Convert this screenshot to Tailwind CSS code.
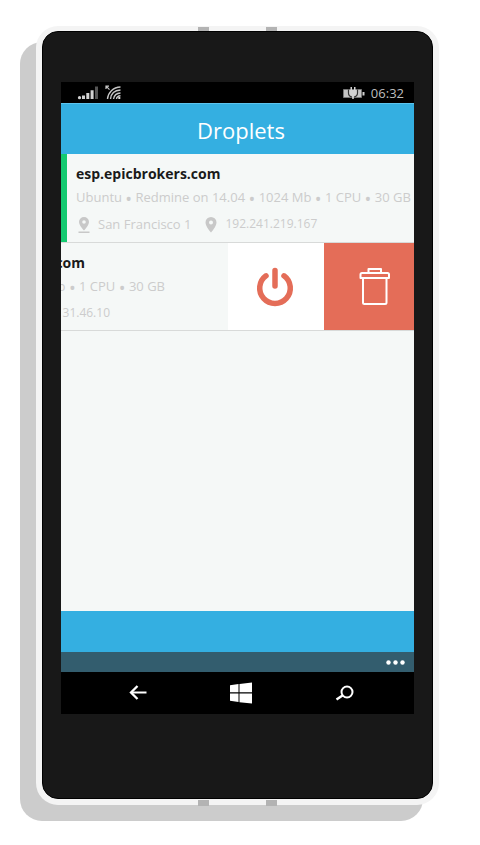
<!DOCTYPE html>
<html lang="en">
<head>
<meta charset="utf-8">
<meta name="viewport" content="width=device-width, initial-scale=1">
<title>Droplets</title>
<script src="https://cdn.jsdelivr.net/npm/@tailwindcss/browser@4"></script>
</head>
<body class="flex min-h-screen bg-white pt-[26px] pr-[41px] pb-10 pl-9 font-['Open_Sans','Noto_Sans',sans-serif]">
<div class="relative flex flex-1 rounded-[22px] bg-[#f4f4f4] px-[6px] pt-[5px] pb-[6px] shadow-[-16px_16px_0_#cccccc]">
  <!-- Antenna bands -->
  <div class="absolute inset-x-0 top-px flex justify-center gap-[57px]"><i class="h-1 w-[11px] bg-[#b3b3b3]"></i><i class="h-1 w-[11px] bg-[#b3b3b3]"></i></div>
  <div class="absolute inset-x-0 -bottom-px flex justify-center gap-[57px]"><i class="h-[6px] w-[11px] bg-[#b3b3b3]"></i><i class="h-[6px] w-[11px] bg-[#b3b3b3]"></i></div>

  <div class="flex min-w-0 flex-1 rounded-2xl border border-black bg-[#181818] px-[18px] pt-[50px] pb-[84px]">
    <div class="flex min-w-0 flex-1 flex-col overflow-hidden bg-[#f5f8f7]">
      <!-- Status bar -->
      <div class="flex h-[21px] shrink-0 items-center bg-black pr-[10px] pl-4 text-[#bdbdbd]">
        <svg class="h-4 w-[22px]" viewBox="0 0 22 16" fill="#d2d2d2" aria-label="Signal"><circle cx="2.5" cy="12.7" r="1.6"/><path d="M5 10.500h3v3.500H5zM9.300 8h3v6h-3zM13.600 5.300h3V14h-3z"/><path fill="#555" d="M18 1.500h3V14h-3z"/></svg>
        <svg class="ml-[6px] h-4 w-4" viewBox="0 0 16 16" fill="none" stroke="#c6c6c6" stroke-width="1.400" aria-label="Wi-Fi"><path d="M2.500 14C3 7.500 8 2.200 15.500 2M5.500 14C6 9 9.500 5.300 15.500 5M8.500 14C9 11 11 8.300 15.500 8M11.500 14c.2-2 1.500-3 4-3.200"/><path d="M13.300 12h2v2h-2z" fill="#ddd" stroke="none"/><path d="M1 4V1.200h3M1 1.200l3.500 3.500" stroke-width="1.200"/></svg>
        <svg class="ml-auto h-4 w-[23px]" viewBox="0 0 23 16" aria-label="Charging"><path d="M1.500 4.500h18v8h-18z" fill="#c4c4c4" stroke="#777"/><path d="M20.500 7h2v3.500h-2z" fill="#cfcfcf"/><path d="M6.500 4.500V8c0 2 1.500 3.500 3.500 4M15.500 4.500V8c0 2-1.500 3.500-3.500 4" fill="none" stroke="#333" stroke-width="1.200"/><path d="M7.500 5h7v3c0 2-1.700 3-3.500 3S7.500 10 7.500 8zM8.500 2H10v4H8.500zM12 2h1.500v4H12zM10.200 10h1.600v4h-1.600z" fill="#d2d2d2"/></svg>
        <time class="ml-[6px] text-[13px] leading-5">06:32</time>
      </div>

      <header class="flex h-[51px] shrink-0 items-center justify-center border-t border-[#5cc4ee] bg-[#34afe1] pt-[2px] pl-[7px] text-white">
        <h1 class="text-[22px] leading-8">Droplets</h1>
      </header>

      <main class="flex-1">
        <ul>
          <li class="flex h-[89px] border-b border-[#d8dad9]">
            <span class="w-[6px] shrink-0 bg-[#14ca70]"></span>
            <a href="#" class="block min-w-0 flex-1 pt-[10px] pl-[9px] text-[13px] whitespace-nowrap text-[#cccccc]">
              <h2 class="text-[14px] leading-5 font-bold text-[#1a1a1a]">esp.epicbrokers.com</h2>
              <p class="mt-[3px] h-5 leading-5">Ubuntu <span class="align-middle text-lg leading-none">•</span> Redmine on 14.04 <span class="align-middle text-lg leading-none">•</span> 1024 Mb <span class="align-middle text-lg leading-none">•</span> 1 CPU <span class="align-middle text-lg leading-none">•</span> 30 GB</p>
              <p class="mt-[7px] flex items-center leading-5">
                <svg class="mt-px h-4 w-4" viewBox="0 0 16 16" fill="#c8c8c8" fill-rule="evenodd"><path d="M8 0a5 5 0 0 0-5 5c0 3.500 5 8.500 5 8.500S13 8.500 13 5a5 5 0 0 0-5-5zm0 3.200a1.800 1.800 0 1 1 0 3.600 1.800 1.800 0 0 1 0-3.600zM2.500 14.500h11V16h-11z"/></svg>
                <span class="ml-[6px]">San Francisco 1</span>
                <svg class="mt-px ml-3 h-4 w-4" viewBox="0 0 16 16" fill="#c8c8c8" fill-rule="evenodd"><path d="M8 0a5.500 5.500 0 0 0-5.500 5.500C2.500 9.500 8 15.500 8 15.500s5.500-6 5.500-10A5.500 5.500 0 0 0 8 0zm0 3.500a2 2 0 1 1 0 4 2 2 0 0 1 0-4z"/></svg>
                <span class="ml-[6px] text-xs leading-5">192.241.219.167</span>
              </p>
            </a>
          </li>
          <!-- Row swiped left to reveal its actions -->
          <li class="flex h-[88px] border-b border-[#d8dad9]">
            <a href="#" class="block min-w-0 flex-1 overflow-hidden pt-[10px] text-[13px] whitespace-nowrap text-[#cccccc]">
              <h2 class="flex w-6 justify-end text-[14px] leading-5 font-bold text-[#1a1a1a]">com</h2>
              <p class="mt-[3px] flex h-5 w-[104px] justify-end leading-5"><span>b <span class="align-middle text-lg leading-none">•</span> 1 CPU <span class="align-middle text-lg leading-none">•</span> 30 GB</span></p>
              <p class="mt-[7px] flex w-[49px] justify-end text-xs leading-5">31.46.10</p>
            </a>
            <button type="button" aria-label="Power" class="flex w-24 shrink-0 items-center justify-center bg-white pr-[2px]">
              <svg class="h-10 w-10" viewBox="0 0 40 40" fill="none" stroke="#e46d58" stroke-width="5.500" stroke-linecap="round"><path d="M20 3.500V19M11 8.800A15.300 15.300 0 1 0 29 8.800"/></svg>
            </button>
            <button type="button" aria-label="Delete" class="flex w-[90px] shrink-0 items-center justify-center bg-[#e46d58] pl-3">
              <svg class="h-10 w-8" viewBox="0 0 32 40" fill="none" stroke="#fff" stroke-width="2" stroke-linejoin="round"><path d="M9.500 6V2h12.500v4M1.500 11V7.500q0-1.500 1.500-1.500h25.500q1.500 0 1.500 1.500V11zM4 11v24.500q0 1.500 1.500 1.500H26q1.500 0 1.500-1.500V11"/></svg>
            </button>
          </li>
        </ul>
      </main>

      <div class="h-[41px] shrink-0 bg-[#34afe1]"></div>
      <div class="flex h-5 shrink-0 items-center justify-end bg-[#335d6e] pr-[9px]">
        <button type="button" aria-label="More"><svg class="h-[5px] w-[19px]" viewBox="0 0 19 5" fill="#fff"><circle cx="2.500" cy="2.500" r="2.200"/><circle cx="9.500" cy="2.500" r="2.200"/><circle cx="16.500" cy="2.500" r="2.200"/></svg></button>
      </div>
      <nav class="grid h-[42px] shrink-0 grid-cols-[1fr_56px_1fr] items-center justify-items-center bg-black pl-[7px]">
        <button type="button" aria-label="Back" class="pr-1"><svg class="h-4 w-5" viewBox="0 0 20 16" fill="none" stroke="#fff" stroke-width="2"><path d="M17.500 7.500H2"/><path d="M8.500 1 2 7.500 8.500 14" stroke-width="2.300"/></svg></button>
        <button type="button" aria-label="Start"><svg class="h-[22px] w-[22px]" viewBox="0 0 22 22" fill="#fff"><path d="M0 3.200 8.500 2v8.300H0zM9.500 1.900 22 .5v9.800H9.500zM0 11.500h8.500V20L0 18.700zM9.500 11.500H22v10L9.500 20.200z"/></svg></button>
        <button type="button" aria-label="Search" class="pl-1"><svg class="h-4 w-5" viewBox="0 0 20 16" fill="none" stroke="#fff" stroke-width="2"><circle cx="13" cy="7" r="5.500"/><path d="m8.500 10.500-6 4" stroke-width="2.500"/></svg></button>
      </nav>
    </div>
  </div>
</div>
</body>
</html>
